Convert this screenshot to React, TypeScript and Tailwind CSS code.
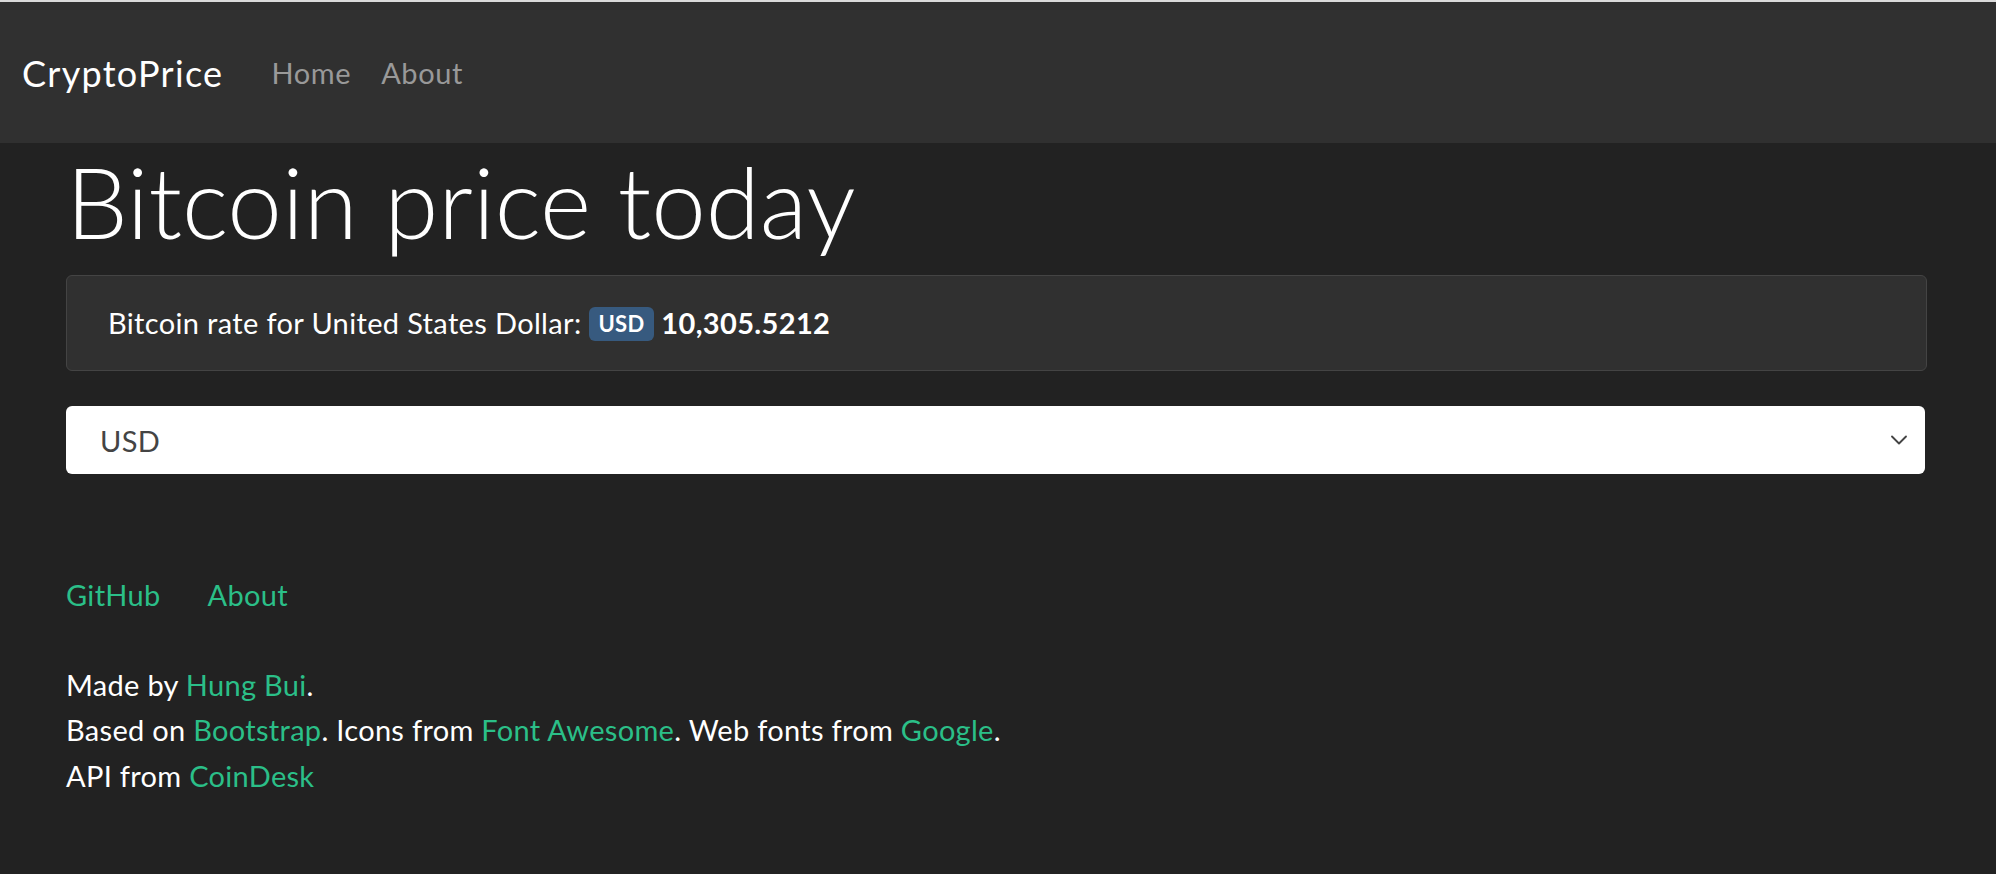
import { ChevronDown } from "lucide-react";

const link = "text-[#2bbf88]";

export default function App() {
  return (
    <div className="min-h-screen bg-[#222222] font-['Lato','Liberation_Sans',sans-serif] text-white">
      <div className="h-[2px] bg-[#dadada]" />
      <nav className="flex h-[141px] items-center bg-[#303030] pl-[22px]">
        <a className="mr-[33px] text-[36px] leading-none tracking-[1.3px] text-white">CryptoPrice</a>
        <a className="px-[15px] text-[29px] leading-none tracking-[0.6px] text-[#999999]">Home</a>
        <a className="px-[15px] text-[29px] leading-none tracking-[0.6px] text-[#999999]">About</a>
      </nav>

      <main className="ml-[66px] mr-[69px]">
        <h1 className="text-[98px] leading-[1.2] font-light">Bitcoin price today</h1>

        <div className="mt-[14px] rounded-[6px] border border-[#444444] bg-[#303030] py-[26px] pl-[41px] text-[29px] leading-[42px] tracking-[0.35px]">
          Bitcoin rate for United States Dollar:{" "}
          <span className="inline-block rounded-[6px] bg-[#375a7f] px-[9px] align-[2px] text-[22px] leading-[34px] font-bold">
            USD
          </span>{" "}
          <span className="font-bold">10,305.5212</span>
        </div>

        <div className="mt-[35px] mr-[2px] flex h-[68px] items-center justify-between rounded-[6px] bg-white pr-[12px] pl-[34px] text-[29px] tracking-[0.35px] text-[#444444]">
          <span className="pt-[3px]">USD</span>
          <ChevronDown className="h-[28px] w-[28px] text-[#444444]" strokeWidth={1.6} />
        </div>

        <footer className="mt-[100px] text-[29px] tracking-[0.3px]">
          <div className="flex gap-[47px] leading-[42px]">
            <a className={link}>GitHub</a>
            <a className={link}>About</a>
          </div>
          <div className="mt-[46px] leading-[45.5px]">
            <p>
              Made by <a className={link}>Hung Bui</a>.
            </p>
            <p>
              Based on <a className={link}>Bootstrap</a>. Icons from <a className={link}>Font Awesome</a>. Web
              fonts from <a className={link}>Google</a>.
            </p>
            <p>
              API from <a className={link}>CoinDesk</a>
            </p>
          </div>
        </footer>
      </main>
    </div>
  );
}
